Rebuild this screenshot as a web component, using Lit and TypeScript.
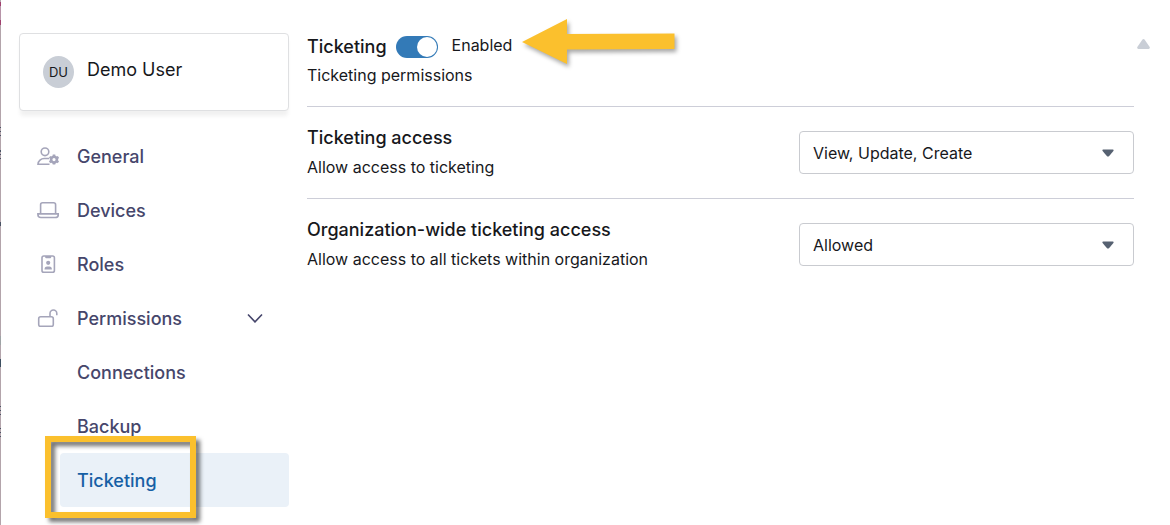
import { LitElement, html, css, svg, nothing } from "lit";
import { customElement, property, state } from "lit/decorators.js";

const icons = {
  general: svg`
    <circle cx="8" cy="4.8" r="3.8" />
    <path d="M12 11.500H7.200A6.200 6.200 0 0 0 1 17.200h11.500" />
    <circle cx="17" cy="12.600" r="2.900" stroke-width="2.600" />
    <path stroke-width="2.600" d="M17 7.600v2M17 15.600v2M12.500 10l2 1.200M19.500 14l2 1.200M12.500 15.200l2-1.200M19.500 11.200l2-1.200" />`,
  devices: svg`
    <path d="M3.600 12V3.700Q3.600 1.700 5.600 1.700h11q2 0 2 2V12" />
    <path d="M.9 12.900h20.400v.6a3 3 0 0 1-3 3H3.900a3 3 0 0 1-3-3z" />`,
  roles: svg`
    <rect x="5" y="1" width="12.400" height="16.200" rx="1.800" />
    <path fill="currentColor" stroke="none" d="M8.200 1h6v1.200q0 1-1 1h-4q-1 0-1-1z" />
    <circle cx="11.200" cy="7.800" r="2.100" fill="currentColor" stroke="none" />
    <path fill="currentColor" stroke="none" d="M7.500 14.600q0-3 2.600-3h2.200q2.600 0 2.600 3z" />`,
  permissions: svg`
    <rect x="1.700" y="7.800" width="14.600" height="9.600" rx="2" />
    <path d="M13 7.600V4.400a3.400 3.400 0 0 1 6.800 0v1.800" />`,
};

type IconName = keyof typeof icons;

interface NavItem {
  label: string;
  icon?: IconName;
  sub?: boolean;
  expandable?: boolean;
  marked?: boolean;
}

const NAV: NavItem[] = [
  { label: "General", icon: "general" },
  { label: "Devices", icon: "devices" },
  { label: "Roles", icon: "roles" },
  { label: "Permissions", icon: "permissions", expandable: true },
  { label: "Connections", sub: true },
  { label: "Backup", sub: true },
  { label: "Ticketing", sub: true, marked: true },
];

@customElement("user-sidebar")
class UserSidebar extends LitElement {
  @property() current = "";

  static styles = css`
    :host {
      display: block;
    }
    .card {
      display: flex;
      align-items: center;
      gap: 13px;
      box-sizing: border-box;
      height: 78px;
      padding: 0 23px;
      border: 1px solid #dfe0e2;
      border-radius: 4px;
      background: #fff;
      box-shadow: 0 6px 4px -1px rgba(0, 0, 0, 0.06);
    }
    .avatar {
      display: grid;
      place-items: center;
      width: 31px;
      height: 32px;
      border-radius: 50%;
      background: #c9ced6;
      font-size: 13px;
    }
    .name {
      font-size: 18px;
      line-height: 24px;
      padding-bottom: 4px;
    }
    .list {
      list-style: none;
      margin: 18px 0 0;
      padding: 0;
    }
    .item {
      position: relative;
    }
    .sub {
      margin-left: 41px;
    }
    .link {
      display: flex;
      align-items: center;
      gap: 18px;
      height: 54px;
      padding: 0 26px 0 18px;
      border-radius: 4px;
      color: #46466b;
      font-size: 18px;
      font-weight: 500;
      text-decoration: none;
    }
    .sub .link {
      padding-left: 17px;
    }
    .link.active {
      background: #eaf1f8;
      color: #1760a5;
    }
    .icon {
      width: 22px;
      height: 18px;
      color: #a5a5ba;
      fill: none;
      stroke: currentColor;
      stroke-width: 1.6;
    }
    .label {
      flex: 1;
    }
    .chevron {
      width: 16px;
      height: 10px;
      fill: none;
      stroke: currentColor;
      stroke-width: 1.6;
    }
    .marker {
      position: absolute;
      inset: -17px 93px -11px -15px;
      border: 6px solid #fbc02d;
      filter: drop-shadow(4px 4px 2px rgba(0, 0, 0, 0.55));
      pointer-events: none;
    }
  `;

  render() {
    return html`
      <div class="card">
        <span class="avatar">DU</span>
        <span class="name">Demo User</span>
      </div>
      <nav aria-label="User settings">
        <ul class="list">
          ${NAV.map(
            (n) => html`<li class="item ${n.sub ? "sub" : ""}">
              <a
                class="link ${n.label === this.current ? "active" : ""}"
                href="#${n.label.toLowerCase()}"
                aria-current=${n.label === this.current ? "page" : nothing}
              >
                ${n.icon
                  ? html`<svg class="icon" viewBox="0 0 22 18" aria-hidden="true">${icons[n.icon]}</svg>`
                  : nothing}
                <span class="label">${n.label}</span>
                ${n.expandable
                  ? html`<svg class="chevron" viewBox="0 0 16 10" aria-hidden="true"><path d="M1 1.500l7 7.400L15 1.500" /></svg>`
                  : nothing}
              </a>
              ${n.marked ? html`<span class="marker"></span>` : nothing}
            </li>`
          )}
        </ul>
      </nav>
    `;
  }
}

@customElement("permission-row")
class PermissionRow extends LitElement {
  @property() heading = "";
  @property() hint = "";
  @property({ type: Array }) options: string[] = [];

  static styles = css`
    :host {
      display: flex;
      align-items: center;
      justify-content: space-between;
      gap: 24px;
      padding: 16px 0;
      border-top: 1px solid #cdced8;
    }
    .title,
    .hint {
      display: block;
    }
    .title {
      font-size: 18px;
      font-weight: 500;
      line-height: 30px;
    }
    .hint {
      margin: 0;
      font-size: 16px;
      line-height: 29px;
    }
    .field {
      display: grid;
      align-items: center;
      flex: 0 1 335px;
    }
    .select,
    .caret {
      grid-area: 1 / 1;
    }
    .select {
      appearance: none;
      width: 100%;
      height: 43px;
      margin: 0;
      padding: 0 40px 0 13px;
      border: 1px solid #c9cbd0;
      border-radius: 4px;
      background: #fff;
      color: inherit;
      font: inherit;
      font-size: 16px;
    }
    .caret {
      justify-self: end;
      width: 12px;
      height: 8px;
      margin-right: 20px;
      fill: #566171;
      pointer-events: none;
    }
  `;

  render() {
    return html`
      <div>
        <label class="title" for="value">${this.heading}</label>
        <p class="hint">${this.hint}</p>
      </div>
      <div class="field">
        <select class="select" id="value">
          ${this.options.map((o) => html`<option>${o}</option>`)}
        </select>
        <svg class="caret" viewBox="0 0 12 8" aria-hidden="true">
          <path d="M1.200.5h9.600q1.300.4.6 1.500L7.200 6.900Q6 7.900 4.800 6.900L.6 2Q-.1.9 1.200.5z" />
        </svg>
      </div>
    `;
  }
}

@customElement("app-root")
class AppRoot extends LitElement {
  @state() private enabled = true;

  static styles = css`
    :host {
      display: flex;
      box-sizing: border-box;
      min-height: 100vh;
      background: #fff;
      color: #17181c;
      font-family: Inter, "Liberation Sans", sans-serif;
    }
    .edge {
      flex: none;
      width: 1px;
      background: linear-gradient(
        #b3a4ab 2px, #a0406f 2px 6px, #b794a8 6px 20px, #a0406f 20px 25px, #b3a4ab 25px 127px,
        #4a5364 127px 128px, #b3a4ab 128px 131px, #4a5364 131px 132px, #b3a4ab 132px 135px,
        #4a5364 135px 136px, #b3a4ab 136px 150px, #4a5364 150px 152px, #b3a4ab 152px 154px,
        #4a5364 154px 155px, #b3a4ab 155px 158px, #4a5364 158px 159px, #b3a4ab 159px 222px,
        #4a5364 222px 226px, #b3a4ab 226px 336px, #9da3a5 336px 345px, #b3a4ab 345px 359px,
        #3c4f60 359px 367px, #b3a4ab 367px 406px, #4a5364 406px 407px, #b3a4ab 407px 410px,
        #4a5364 410px 411px, #b3a4ab 411px 414px, #4a5364 414px 415px, #b3a4ab 415px 428px,
        #4a5364 428px 429px, #b3a4ab 429px 432px, #4a5364 432px 433px, #b3a4ab 433px 436px,
        #4a5364 436px 437px, #b3a4ab 437px
      );
    }
    .sidebar {
      flex: none;
      width: 270px;
      margin: 33px 18px 0;
    }
    .main {
      flex: 1;
      min-width: 0;
      padding-top: 32px;
    }
    .head {
      padding-bottom: 16px;
    }
    .line {
      display: flex;
      align-items: center;
      height: 29px;
    }
    .title {
      margin: 0;
      font-size: 18px;
      font-weight: 500;
    }
    .switch {
      display: flex;
      align-items: center;
      gap: 14px;
      margin-left: 9px;
      font-size: 16px;
    }
    .toggle {
      appearance: none;
      display: flex;
      justify-content: flex-start;
      box-sizing: border-box;
      width: 42px;
      height: 22px;
      margin: 0;
      padding: 1px;
      border-radius: 11px;
      background: #a9afb9;
    }
    .toggle:checked {
      justify-content: flex-end;
      background: #337ab7;
    }
    .toggle::before {
      content: "";
      width: 20px;
      height: 20px;
      border-radius: 50%;
      background: #fff;
    }
    .state {
      position: relative;
      padding-bottom: 3px;
    }
    .arrow {
      position: absolute;
      top: -16px;
      left: calc(100% + 10px);
      width: 160px;
      height: 56px;
      pointer-events: none;
      filter: drop-shadow(2px 3px 2px rgba(0, 0, 0, 0.35));
    }
    .sub {
      margin: 0;
      font-size: 16px;
      line-height: 29px;
    }
    .rail {
      flex: none;
      width: 36px;
      padding-top: 39px;
    }
    .up {
      display: block;
      width: 13px;
      height: 10px;
      margin-left: 3px;
      fill: #c9ced6;
    }
  `;

  private toggle(e: Event) {
    this.enabled = (e.target as HTMLInputElement).checked;
  }

  render() {
    return html`
      <div class="edge"></div>
      <user-sidebar class="sidebar" current="Ticketing"></user-sidebar>
      <main class="main">
        <header class="head">
          <div class="line">
            <h1 class="title">Ticketing</h1>
            <label class="switch">
              <input class="toggle" type="checkbox" role="switch" .checked=${this.enabled} @change=${this.toggle} />
              <span class="state">
                ${this.enabled ? "Enabled" : "Disabled"}
                <svg class="arrow" viewBox="0 0 160 56" aria-hidden="true">
                  <path fill="#fbc02d" d="M0 23L45 0V15L152.500 14.500V30L45 30.500V45z" />
                </svg>
              </span>
            </label>
          </div>
          <p class="sub">Ticketing permissions</p>
        </header>
        <permission-row
          heading="Ticketing access"
          hint="Allow access to ticketing"
          .options=${["View, Update, Create", "View, Update", "View", "Denied"]}
        ></permission-row>
        <permission-row
          heading="Organization-wide ticketing access"
          hint="Allow access to all tickets within organization"
          .options=${["Allowed", "Denied"]}
        ></permission-row>
      </main>
      <div class="rail">
        <svg class="up" viewBox="0 0 13 10" aria-hidden="true">
          <path d="M5.300.7q1.200-1.200 2.400 0l5 7.200q.6 1.900-1 2.100H1.300Q-.3 9.800.3 7.900z" />
        </svg>
      </div>
    `;
  }
}
